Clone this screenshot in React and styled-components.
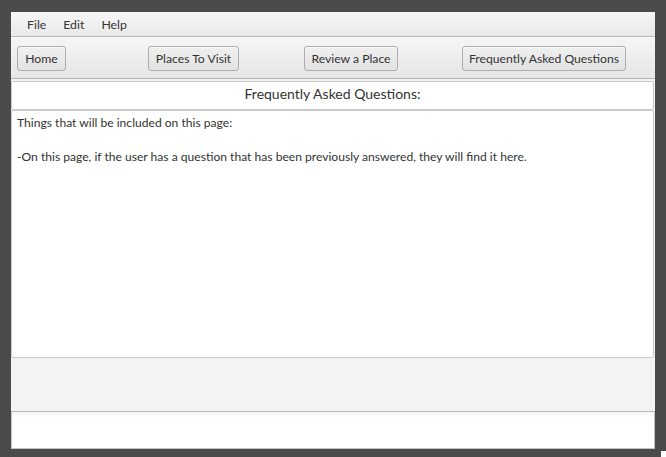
import React from 'react';
import styled, { createGlobalStyle } from 'styled-components';

const GlobalStyle = createGlobalStyle`
  html, body {
    margin: 0;
    padding: 0;
    height: 100%;
  }
  body {
    background-color: #4a4a4a;
    background-image: repeating-conic-gradient(#474747 0 25%, #4e4e4e 0 50%);
    background-size: 2px 2px;
    font-family: "Lato", "Open Sans", "Liberation Sans", sans-serif;
    overflow: hidden;
  }
  #root {
    height: 100%;
  }
`;

const Desktop = styled.div`
  position: relative;
  height: 100%;
  padding: 12px 0 0 11px;
  box-sizing: border-box;
`;

const Window = styled.div`
  width: 644px;
  height: 437px;
  background: #f3f3f3;
  display: flex;
  flex-direction: column;
  box-sizing: border-box;
`;

const MenuBar = styled.div`
  height: 25px;
  box-sizing: border-box;
  display: flex;
  align-items: center;
  padding-left: 16px;
  background: linear-gradient(#f6f6f6, #e9e9e9);
  border-bottom: 1px solid #b8b8b8;
`;

const MenuItem = styled.span`
  font-size: 12.3px;
  color: #333;
  margin-right: ${p => p.space}px;
`;

const ToolBar = styled.div`
  height: 42px;
  box-sizing: border-box;
  display: flex;
  align-items: center;
  padding: 1px 0 0 6px;
  background: linear-gradient(#f5f5f5, #e6e6e6);
  border-bottom: 1px solid #b3b3b3;
  border-top: 1px solid #fbfbfb;
`;

const NavButton = styled.button`
  height: 25px;
  width: ${p => p.w}px;
  margin-left: ${p => p.offset}px;
  padding: 0;
  border: 1px solid #adadad;
  border-radius: 3px;
  background: linear-gradient(#f0f0f0, #e2e2e2);
  box-shadow: inset 0 1px 0 #fafafa;
  font-family: inherit;
  font-size: 12.2px;
  color: #333;
  cursor: pointer;
`;

const Content = styled.div`
  flex: 1;
  display: flex;
  flex-direction: column;
  padding-top: 2px;
`;

const Heading = styled.div`
  height: 29px;
  box-sizing: border-box;
  margin-right: 1px;
  padding-bottom: 5px;
  background: #fff;
  border: 1px solid #c8c8c8;
  border-radius: 2px;
  display: flex;
  align-items: center;
  justify-content: center;
  font-size: 14px;
  color: #333;
`;

const TextArea = styled.div`
  height: 248px;
  box-sizing: border-box;
  margin-right: 1px;
  background: #fff;
  border: 1px solid #cacaca;
  border-radius: 2px;
  padding: 3px 5px;
  font-size: 12.1px;
  line-height: 17px;
  color: #333;

  p {
    margin: 0 0 17px;
  }
`;

const Spacer = styled.div`
  height: 53px;
  border-bottom: 1px solid #b9b9b9;
`;

const Field = styled.div`
  flex: 1;
  background: linear-gradient(#f6f6f6, #ffffff 6px);
  border-left: 1px solid #c4c4c4;
  border-right: 1px solid #c4c4c4;
  border-bottom: 1px solid #c4c4c4;
`;

const Notch = styled.div`
  position: absolute;
  left: 661px;
  top: 451px;
  width: 5px;
  height: 6px;
  background: #fff;
`;

const menus = [
  { label: 'File', space: 17 },
  { label: 'Edit', space: 17 },
  { label: 'Help', space: 0 },
];

const buttons = [
  { label: 'Home', w: 49, offset: 0 },
  { label: 'Places To Visit', w: 91, offset: 82 },
  { label: 'Review a Place', w: 94, offset: 65 },
  { label: 'Frequently Asked Questions', w: 164, offset: 64 },
];

export default function App() {
  return (
    <>
      <GlobalStyle />
      <Desktop>
        <Window>
          <MenuBar>
            {menus.map(m => (
              <MenuItem key={m.label} space={m.space}>{m.label}</MenuItem>
            ))}
          </MenuBar>
          <ToolBar>
            {buttons.map(b => (
              <NavButton key={b.label} w={b.w} offset={b.offset}>{b.label}</NavButton>
            ))}
          </ToolBar>
          <Content>
            <Heading>Frequently Asked Questions:</Heading>
            <TextArea>
              <p>Things that will be included on this page:</p>
              <p>-On this page, if the user has a question that has been previously answered, they will find it here.</p>
            </TextArea>
            <Spacer />
            <Field />
          </Content>
        </Window>
        <Notch />
      </Desktop>
    </>
  );
}
